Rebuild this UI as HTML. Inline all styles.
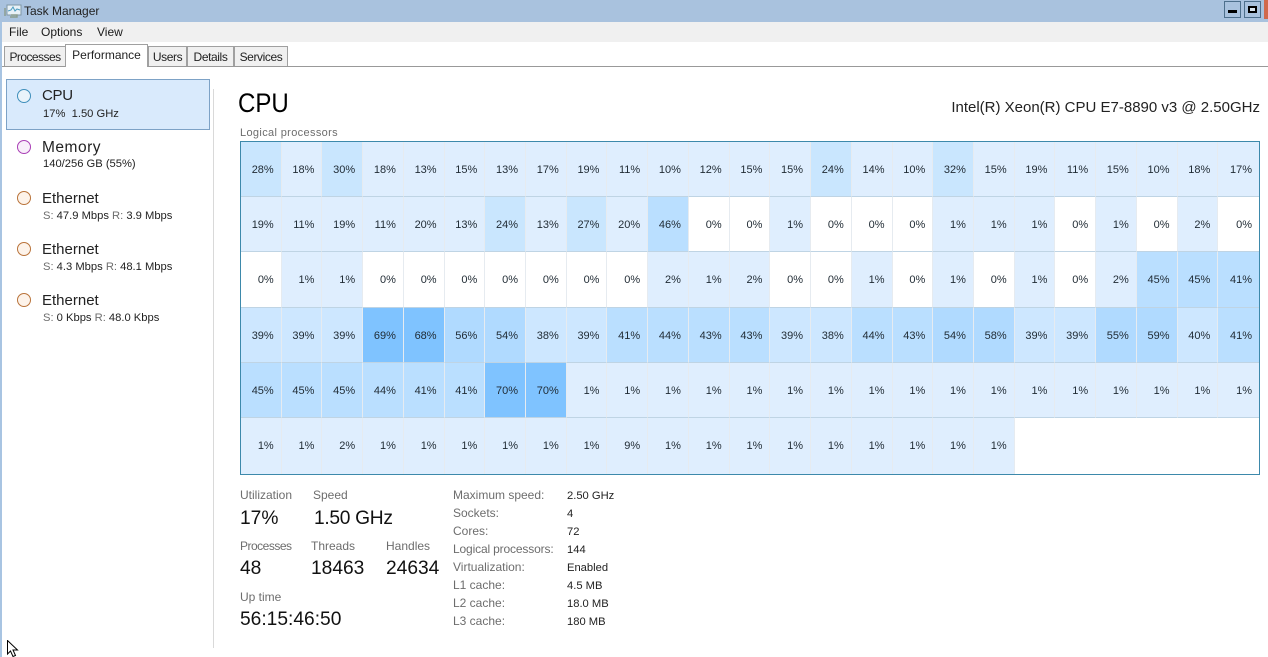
<!DOCTYPE html>
<html><head><meta charset="utf-8"><title>Task Manager</title>
<style>
html,body{margin:0;padding:0;background:#fff}
body{width:1268px;height:657px;position:relative;overflow:hidden;font-family:"Liberation Sans",sans-serif;color:#1a1a1a}
.t{position:absolute;white-space:nowrap;line-height:16px}
.g{color:#6d6d6d}
.lab{font-size:12px;color:#6d6d6d}
.val{font-size:19.2px;line-height:24px;color:#111}
.s{font-size:11.2px;color:#222;line-height:18px}
.n{font-size:15px;color:#222;line-height:18px}
.tab{position:absolute;top:46px;height:20px;box-sizing:border-box;background:#f0f0f0;border:1px solid #a0a0a0;border-bottom:0;font-size:12px;line-height:20px;text-align:center;color:#222;letter-spacing:-.4px}
.dot{position:absolute;left:17px;width:14px;height:14px;border-radius:50%;box-sizing:border-box;border:1.3px solid #b9733a;background:#fdf3ea}
#grid{position:absolute;left:240px;top:141px;width:1020px;height:334px;box-sizing:border-box;border:1px solid #3d89ab;display:grid;grid-template-columns:repeat(25,1fr);grid-template-rows:55px 55px 56px 55px 55px 56px;font-size:11px;color:#1f2a33}
#grid span{display:block;box-sizing:border-box;text-align:right;padding-right:7px;line-height:56px;overflow:hidden;min-height:0;border-right:1px solid #e6ebf0;border-bottom:1px solid #bfd4e4}
#grid span:nth-child(25n){border-right:0}
.a{background:#dfeefe}.b{background:#c9e6fe}.c{background:#badfff}.d{background:#b0daff}.e{background:#7fc3ff}.f{background:#cde7ff}
.i{border-bottom:0!important}
</style></head><body>
<div style="position:absolute;left:0;top:0;width:2px;height:657px;background:#a8c4e2"></div>
<div style="position:absolute;left:0;top:0;width:1268px;height:22px;background:#a9c2de"></div>
<svg style="position:absolute;left:4px;top:3px" width="18" height="16" viewBox="0 0 18 16"><rect x="3" y="2" width="14" height="10" fill="#e8f1f7" stroke="#7e97a6"/><path d="M4 8l3-1 2-3 2 4 2-2 3 1" fill="none" stroke="#4a9cc0"/><path d="M1 5v8M7 12h6v2H6" stroke="#8a9c8c" fill="none" stroke-width="1.4"/></svg>
<div class="t" style="left:24px;top:3px;font-size:12px;color:#222">Task Manager</div>
<div style="position:absolute;left:1224px;top:1px;width:17px;height:17px;box-sizing:border-box;border:1px solid #4d6f8c;background:#a9c2de"></div>
<div style="position:absolute;left:1228px;top:10px;width:9px;height:3px;background:#000"></div>
<div style="position:absolute;left:1244px;top:1px;width:17px;height:17px;box-sizing:border-box;border:1px solid #4d6f8c;background:#a9c2de"></div>
<div style="position:absolute;left:1248px;top:6px;width:9px;height:7px;box-sizing:border-box;border:2px solid #000;border-top-width:2px;background:#d8e4ef"></div>
<div style="position:absolute;left:1264px;top:0;width:4px;height:19px;background:#d1694c"></div>
<div style="position:absolute;left:2px;top:22px;width:1266px;height:20px;background:#f0f0f0"></div>
<div class="t" style="left:9px;top:24px;font-size:12px">File</div>
<div class="t" style="left:41px;top:24px;font-size:12px">Options</div>
<div class="t" style="left:97px;top:24px;font-size:12px">View</div>
<div style="position:absolute;left:2px;top:66px;width:1266px;height:1px;background:#999"></div>
<div class="tab" style="left:4px;width:62px;letter-spacing:-.55px">Processes</div>
<div class="tab" style="left:65px;top:44px;width:83px;height:23px;background:#fff;line-height:21px;z-index:2;letter-spacing:0">Performance</div>
<div class="tab" style="left:148px;width:39px">Users</div>
<div class="tab" style="left:187px;width:47px">Details</div>
<div class="tab" style="left:234px;width:54px">Services</div>

<div style="position:absolute;left:213px;top:89px;width:1px;height:559px;background:#d9d9d9"></div>
<div style="position:absolute;left:6px;top:79px;width:204px;height:51px;box-sizing:border-box;background:#d9eafc;border:1px solid #7da2c6"></div>
<div class="dot" style="top:89px;border-color:#3f8fbb;background:#e9f3fa"></div>
<div class="t n" style="left:42px;top:87px;letter-spacing:-.3px">CPU</div>
<div class="t s" style="left:43px;top:105px">17%&nbsp; 1.50 GHz</div>
<div class="dot" style="top:140px;border-color:#a93fb5;background:#f8eefa"></div>
<div class="t n" style="left:42px;top:139px;letter-spacing:.5px;font-size:15.5px">Memory</div>
<div class="t s" style="left:43px;top:155px">140/256 GB (55%)</div>
<div class="dot" style="top:191px"></div>
<div class="t n" style="left:42px;top:190px">Ethernet</div>
<div class="t s" style="left:43px;top:207px"><span class="g">S:</span> 47.9 Mbps <span class="g">R:</span> 3.9 Mbps</div>
<div class="dot" style="top:242px"></div>
<div class="t n" style="left:42px;top:241px">Ethernet</div>
<div class="t s" style="left:43px;top:258px"><span class="g">S:</span> 4.3 Mbps <span class="g">R:</span> 48.1 Mbps</div>
<div class="dot" style="top:293px"></div>
<div class="t n" style="left:42px;top:292px">Ethernet</div>
<div class="t s" style="left:43px;top:309px"><span class="g">S:</span> 0 Kbps <span class="g">R:</span> 48.0 Kbps</div>

<div class="t" style="left:238px;top:87px;font-size:27px;line-height:32px;color:#000;transform:scaleX(.89);transform-origin:left">CPU</div>
<div class="t" style="right:8px;top:99px;font-size:15px;line-height:18px;color:#222">Intel(R) Xeon(R) CPU E7-8890 v3 @ 2.50GHz</div>
<div class="t lab" style="left:240px;top:125px;font-size:11px;letter-spacing:.35px">Logical processors</div>

<div id="grid">
<span class="b">28%</span><span class="a">18%</span><span class="b">30%</span><span class="a">18%</span><span class="a">13%</span><span class="a">15%</span><span class="a">13%</span><span class="a">17%</span><span class="a">19%</span><span class="a">11%</span><span class="a">10%</span><span class="a">12%</span><span class="a">15%</span><span class="a">15%</span><span class="b">24%</span><span class="a">14%</span><span class="a">10%</span><span class="b">32%</span><span class="a">15%</span><span class="a">19%</span><span class="a">11%</span><span class="a">15%</span><span class="a">10%</span><span class="a">18%</span><span class="a">17%</span>
<span class="a">19%</span><span class="a">11%</span><span class="a">19%</span><span class="a">11%</span><span class="a">20%</span><span class="a">13%</span><span class="b">24%</span><span class="a">13%</span><span class="b">27%</span><span class="a">20%</span><span class="c">46%</span><span>0%</span><span>0%</span><span class="a">1%</span><span>0%</span><span>0%</span><span>0%</span><span class="a">1%</span><span class="a">1%</span><span class="a">1%</span><span>0%</span><span class="a">1%</span><span>0%</span><span class="a">2%</span><span>0%</span>
<span>0%</span><span class="a">1%</span><span class="a">1%</span><span>0%</span><span>0%</span><span>0%</span><span>0%</span><span>0%</span><span>0%</span><span>0%</span><span class="a">2%</span><span class="a">1%</span><span class="a">2%</span><span>0%</span><span>0%</span><span class="a">1%</span><span>0%</span><span class="a">1%</span><span>0%</span><span class="a">1%</span><span>0%</span><span class="a">2%</span><span class="c">45%</span><span class="c">45%</span><span class="c">41%</span>
<span class="f">39%</span><span class="f">39%</span><span class="f">39%</span><span class="e">69%</span><span class="e">68%</span><span class="d">56%</span><span class="d">54%</span><span class="f">38%</span><span class="f">39%</span><span class="c">41%</span><span class="c">44%</span><span class="c">43%</span><span class="c">43%</span><span class="f">39%</span><span class="f">38%</span><span class="c">44%</span><span class="c">43%</span><span class="d">54%</span><span class="d">58%</span><span class="f">39%</span><span class="f">39%</span><span class="d">55%</span><span class="d">59%</span><span class="f">40%</span><span class="c">41%</span>
<span class="c">45%</span><span class="c">45%</span><span class="c">45%</span><span class="c">44%</span><span class="c">41%</span><span class="c">41%</span><span class="e">70%</span><span class="e">70%</span><span class="a">1%</span><span class="a">1%</span><span class="a">1%</span><span class="a">1%</span><span class="a">1%</span><span class="a">1%</span><span class="a">1%</span><span class="a">1%</span><span class="a">1%</span><span class="a">1%</span><span class="a">1%</span><span class="a">1%</span><span class="a">1%</span><span class="a">1%</span><span class="a">1%</span><span class="a">1%</span><span class="a">1%</span>
<span class="a i">1%</span><span class="a i">1%</span><span class="a i">2%</span><span class="a i">1%</span><span class="a i">1%</span><span class="a i">1%</span><span class="a i">1%</span><span class="a i">1%</span><span class="a i">1%</span><span class="a i">9%</span><span class="a i">1%</span><span class="a i">1%</span><span class="a i">1%</span><span class="a i">1%</span><span class="a i">1%</span><span class="a i">1%</span><span class="a i">1%</span><span class="a i">1%</span><span class="a i">1%</span>
</div>

<div class="t lab" style="left:240px;top:487px">Utilization</div>
<div class="t lab" style="left:313px;top:487px">Speed</div>
<div class="t val" style="left:240px;top:507px">17%</div>
<div class="t val" style="left:314px;top:507px;letter-spacing:-.3px">1.50 GHz</div>
<div class="t lab" style="left:240px;top:538px;letter-spacing:-.5px">Processes</div>
<div class="t lab" style="left:311px;top:538px">Threads</div>
<div class="t lab" style="left:386px;top:538px">Handles</div>
<div class="t val" style="left:240px;top:557px">48</div>
<div class="t val" style="left:311px;top:557px">18463</div>
<div class="t val" style="left:386px;top:557px">24634</div>
<div class="t lab" style="left:240px;top:589px">Up time</div>
<div class="t val" style="left:240px;top:608px">56:15:46:50</div>

<div class="t lab" style="left:453px;top:487px">Maximum speed:</div><div class="t s" style="left:567px;top:487px">2.50 GHz</div>
<div class="t lab" style="left:453px;top:505px">Sockets:</div><div class="t s" style="left:567px;top:505px">4</div>
<div class="t lab" style="left:453px;top:523px">Cores:</div><div class="t s" style="left:567px;top:523px">72</div>
<div class="t lab" style="left:453px;top:541px;letter-spacing:-.15px">Logical processors:</div><div class="t s" style="left:567px;top:541px">144</div>
<div class="t lab" style="left:453px;top:559px">Virtualization:</div><div class="t s" style="left:567px;top:559px">Enabled</div>
<div class="t lab" style="left:453px;top:577px">L1 cache:</div><div class="t s" style="left:567px;top:577px">4.5 MB</div>
<div class="t lab" style="left:453px;top:595px">L2 cache:</div><div class="t s" style="left:567px;top:595px">18.0 MB</div>
<div class="t lab" style="left:453px;top:613px">L3 cache:</div><div class="t s" style="left:567px;top:613px">180 MB</div>

<svg style="position:absolute;left:6px;top:640px" width="14" height="17" viewBox="0 0 14 17"><path d="M1.500 .5V14l3-3 2.500 5.500 2.500-1L7 10h4.500z" fill="#fff" stroke="#000"/></svg>
</body></html>
